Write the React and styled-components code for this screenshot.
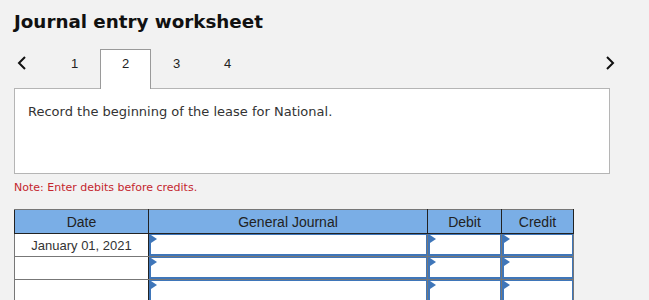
import React from 'react';
import styled, { createGlobalStyle } from 'styled-components';

const Global = createGlobalStyle`
  html, body {
    margin: 0;
    padding: 0;
    background: #f2f2f2;
  }
  body {
    width: 649px;
    height: 300px;
    overflow: hidden;
  }
`;

const Page = styled.div`
  padding: 10px 0 0 14px;
  width: 635px;
  box-sizing: border-box;
`;

const Title = styled.h1`
  margin: 0;
  font-family: "DejaVu Sans", Verdana, sans-serif;
  font-weight: bold;
  font-size: 18.3px;
  line-height: 24px;
  color: #111;
`;

const TabBar = styled.div`
  display: flex;
  align-items: flex-end;
  height: 40px;
  margin-top: 14px;
  width: 601px;
`;

const Arrow = styled.div`
  width: 35px;
  height: 40px;
  display: flex;
  align-items: flex-start;
  padding-top: 8px;
  justify-content: ${p => (p.$right ? 'flex-end' : 'flex-start')};
  padding-left: ${p => (p.$right ? '0' : '3px')};
  box-sizing: border-box;
  margin-left: ${p => (p.$right ? 'auto' : '0')};
`;

const Tab = styled.div`
  width: 51px;
  height: 40px;
  box-sizing: border-box;
  display: flex;
  align-items: flex-start;
  justify-content: center;
  padding-top: 6px;
  font-family: "Liberation Sans", Arial, sans-serif;
  font-size: 13px;
  color: #222;
  border: 1px solid ${p => (p.$active ? '#9a9a9a' : 'transparent')};
  border-bottom: none;
  background: ${p => (p.$active ? '#fff' : 'transparent')};
  margin-bottom: -1px;
  position: relative;
  z-index: 1;
`;

const Prompt = styled.div`
  width: 596px;
  height: 86px;
  box-sizing: border-box;
  background: #fff;
  border: 1px solid #b5b5b5;
  padding: 15px 13px;
  font-family: "DejaVu Sans", Verdana, sans-serif;
  font-size: 13px;
  color: #333;
`;

const Note = styled.div`
  margin-top: 7px;
  font-family: "DejaVu Sans", Verdana, sans-serif;
  font-size: 11px;
  color: #c4262e;
  line-height: 14px;
`;

const Table = styled.table`
  margin-top: 14px;
  border-collapse: collapse;
  table-layout: fixed;
  font-family: "Liberation Sans", Arial, sans-serif;
  font-size: 13px;
`;

const Head = styled.th`
  background: #7aaee6;
  color: #222;
  font-weight: normal;
  font-size: 14px;
  height: 23px;
  padding: 0;
  border: 1px solid #222;
  border-top-color: #777;
  width: ${p => p.$w}px;
`;

const DateCell = styled.td`
  background: #fff;
  height: 22px;
  padding: 0;
  text-align: center;
  color: #333;
  border: 1px solid #777;
  border-right: 1px solid #222;
`;

const InputCell = styled.td`
  background: #fff;
  height: 22px;
  padding: 0;
  border: 1px solid #777;
`;

const Field = styled.div`
  height: 22px;
  box-sizing: border-box;
  border: 2px solid #3f76b9;
  border-right-width: 1px;
  border-top-width: 1px;
  position: relative;
  &::before {
    content: '';
    position: absolute;
    left: 0;
    top: 0;
    border-left: 6px solid #3f76b9;
    border-top: 4px solid transparent;
    border-bottom: 4px solid transparent;
  }
`;

const Chevron = ({ dir }) => (
  <svg width="10" height="14" viewBox="0 0 10 14">
    <path
      d={dir === 'left' ? 'M8 1 L2 7 L8 13' : 'M2 1 L8 7 L2 13'}
      fill="none"
      stroke="#111"
      strokeWidth="2"
    />
  </svg>
);

const rows = ['January 01, 2021', '', ''];

export default function App() {
  return (
    <>
      <Global />
      <Page>
        <Title>Journal entry worksheet</Title>
        <TabBar>
          <Arrow><Chevron dir="left" /></Arrow>
          {[1, 2, 3, 4].map(n => (
            <Tab key={n} $active={n === 2}>{n}</Tab>
          ))}
          <Arrow $right><Chevron dir="right" /></Arrow>
        </TabBar>
        <Prompt>Record the beginning of the lease for National.</Prompt>
        <Note>Note: Enter debits before credits.</Note>
        <Table>
          <thead>
            <tr>
              <Head $w={133}>Date</Head>
              <Head $w={278}>General Journal</Head>
              <Head $w={73}>Debit</Head>
              <Head $w={71}>Credit</Head>
            </tr>
          </thead>
          <tbody>
            {rows.map((d, i) => (
              <tr key={i}>
                <DateCell>{d}</DateCell>
                <InputCell><Field /></InputCell>
                <InputCell><Field /></InputCell>
                <InputCell><Field /></InputCell>
              </tr>
            ))}
          </tbody>
        </Table>
      </Page>
    </>
  );
}
